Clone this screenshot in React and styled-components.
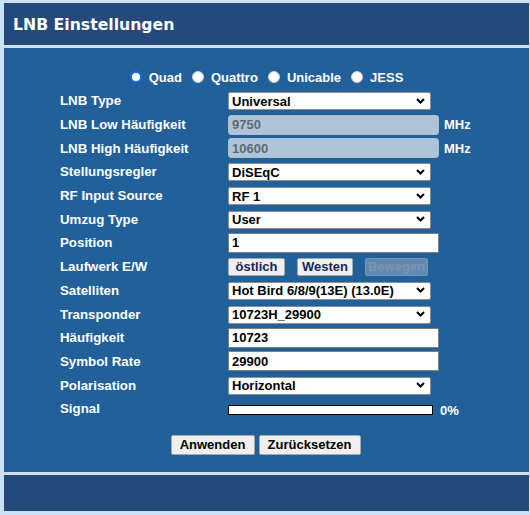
import React from "react";
import styled, { createGlobalStyle } from "styled-components";

const GlobalStyle = createGlobalStyle`
  html, body {
    margin: 0;
    padding: 0;
    background: #cde1f4;
    font-family: "Liberation Sans", Arial, sans-serif;
  }
`;

const Page = styled.div`
  display: flex;
  flex-direction: column;
  gap: 3px;
  padding: 3px 1px 4px 4px;
`;

const Panel = styled.section`
  background: ${(p) => (p.$main ? "#22609a" : "#24497b")};
  height: ${(p) => p.$h}px;
  box-sizing: border-box;
`;

const Header = styled(Panel)`
  display: flex;
  align-items: center;
  padding-left: 9px;
`;

const Title = styled.h1`
  margin: 0;
  color: #fff;
  font-family: "DejaVu Sans", Verdana, sans-serif;
  font-size: 15.7px;
  font-weight: 700;
`;

const Body = styled(Panel)`
  display: flex;
  flex-direction: column;
  padding: 17px 0 0 56px;
`;

const RadioRow = styled.div`
  display: flex;
  justify-content: center;
  align-items: center;
  gap: 10px;
  height: 24px;
  margin-left: -56px;
`;

const RadioOption = styled.label`
  display: flex;
  align-items: center;
  gap: 7px;
  color: #fff;
  font-size: 13px;
  font-weight: 700;
`;

const RadioDot = styled.span`
  width: 12px;
  height: 12px;
  border-radius: 50%;
  box-sizing: border-box;
  background: #fff;
  border: ${(p) => (p.$checked ? "2px solid #1b6df2" : "1px solid #c8ccd2")};
`;

const Grid = styled.div`
  display: grid;
  grid-template-columns: 168px auto;
  grid-auto-rows: 23.7px;
  align-items: center;
`;

const Label = styled.div`
  color: #fff;
  font-size: 13.3px;
  font-weight: 700;
  white-space: nowrap;
`;

const Cell = styled.div`
  display: flex;
  align-items: center;
`;

const SelectWrap = styled.div`
  position: relative;
  width: 203px;
  height: 18px;
`;

const Select = styled.select`
  appearance: none;
  -webkit-appearance: none;
  width: 100%;
  height: 100%;
  box-sizing: border-box;
  border: 1px solid #8f8f8f;
  border-radius: 2px;
  background: #fff;
  padding: 0 0 0 3px;
  font-family: "Liberation Sans", Arial, sans-serif;
  font-size: 13px;
  font-weight: 700;
  color: #000;
  outline: none;
`;

const Chevron = styled.svg`
  position: absolute;
  right: 6px;
  top: 6px;
  pointer-events: none;
`;

const TextInput = styled.input`
  width: 211px;
  height: 20px;
  box-sizing: border-box;
  border: 1px solid #7d7d7d;
  border-radius: 1px;
  background: #fff;
  padding: 0 3px;
  font-family: "Liberation Sans", Arial, sans-serif;
  font-size: 13px;
  font-weight: 700;
  color: #000;
  outline: none;

  &:disabled {
    background: #afc4d7;
    border: 1px solid #a6bccf;
    border-radius: 3px;
    color: #606a74;
  }
`;

const Unit = styled.span`
  margin-left: 5px;
  color: #fff;
  font-size: 13px;
  font-weight: 700;
`;

const ButtonGroup = styled.div`
  display: flex;
  gap: 12px;
`;

const Btn = styled.button`
  width: ${(p) => p.$w}px;
  height: ${(p) => p.$h || 18}px;
  box-sizing: border-box;
  padding: 0;
  border: 1px solid #a7a7a7;
  border-radius: 2px;
  background: #efefef;
  font-family: "Liberation Sans", Arial, sans-serif;
  font-size: 13px;
  font-weight: 700;
  color: ${(p) => (p.$navy ? "#1c2756" : "#000")};

  &:disabled {
    background: #5f89b3;
    border-color: #6f95bb;
    color: #7e94aa;
  }
`;

const SignalBar = styled.div`
  width: 205px;
  height: 10px;
  margin-top: 3px;
  box-sizing: border-box;
  border: 1px solid #000;
  background: #fff;
`;

const Percent = styled.span`
  margin-left: 7px;
  margin-top: 3px;
  color: #fff;
  font-size: 13px;
  font-weight: 700;
`;

const Actions = styled.div`
  display: flex;
  justify-content: center;
  gap: 4px;
  margin: 14px 0 0 -58px;
`;

const DropDown = ({ value }) => (
  <SelectWrap>
    <Select defaultValue={value}>
      <option>{value}</option>
    </Select>
    <Chevron width="9" height="6" viewBox="0 0 9 6">
      <polyline points="1,1 4.5,4.5 8,1" fill="none" stroke="#000" strokeWidth="2" />
    </Chevron>
  </SelectWrap>
);

const rows = [
  { label: "LNB Type", select: "Universal" },
  { label: "LNB Low Häufigkeit", input: "9750", disabled: true, unit: "MHz" },
  { label: "LNB High Häufigkeit", input: "10600", disabled: true, unit: "MHz" },
  { label: "Stellungsregler", select: "DiSEqC" },
  { label: "RF Input Source", select: "RF 1" },
  { label: "Umzug Type", select: "User" },
  { label: "Position", input: "1" },
  { label: "Laufwerk E/W", buttons: true },
  { label: "Satelliten", select: "Hot Bird 6/8/9(13E) (13.0E)" },
  { label: "Transponder", select: "10723H_29900" },
  { label: "Häufigkeit", input: "10723" },
  { label: "Symbol Rate", input: "29900" },
  { label: "Polarisation", select: "Horizontal" },
  { label: "Signal", signal: true },
];

const modes = ["Quad", "Quattro", "Unicable", "JESS"];

export default function App() {
  return (
    <>
      <GlobalStyle />
      <Page>
        <Header $h={42}>
          <Title>LNB Einstellungen</Title>
        </Header>
        <Body $main $h={424}>
          <RadioRow>
            {modes.map((m, i) => (
              <RadioOption key={m}>
                <RadioDot $checked={i === 0} />
                {m}
              </RadioOption>
            ))}
          </RadioRow>
          <Grid>
            {rows.map((r) => (
              <React.Fragment key={r.label}>
                <Label>{r.label}</Label>
                <Cell>
                  {r.select && <DropDown value={r.select} />}
                  {r.input && (
                    <TextInput defaultValue={r.input} disabled={r.disabled} />
                  )}
                  {r.unit && <Unit>{r.unit}</Unit>}
                  {r.buttons && (
                    <ButtonGroup>
                      <Btn $w={57} $navy>östlich</Btn>
                      <Btn $w={56} $navy>Westen</Btn>
                      <Btn $w={63} disabled>Bewegen</Btn>
                    </ButtonGroup>
                  )}
                  {r.signal && (
                    <>
                      <SignalBar />
                      <Percent>0%</Percent>
                    </>
                  )}
                </Cell>
              </React.Fragment>
            ))}
          </Grid>
          <Actions>
            <Btn $w={84} $h={20}>Anwenden</Btn>
            <Btn $w={102} $h={20}>Zurücksetzen</Btn>
          </Actions>
        </Body>
        <Panel $h={36} />
      </Page>
    </>
  );
}
